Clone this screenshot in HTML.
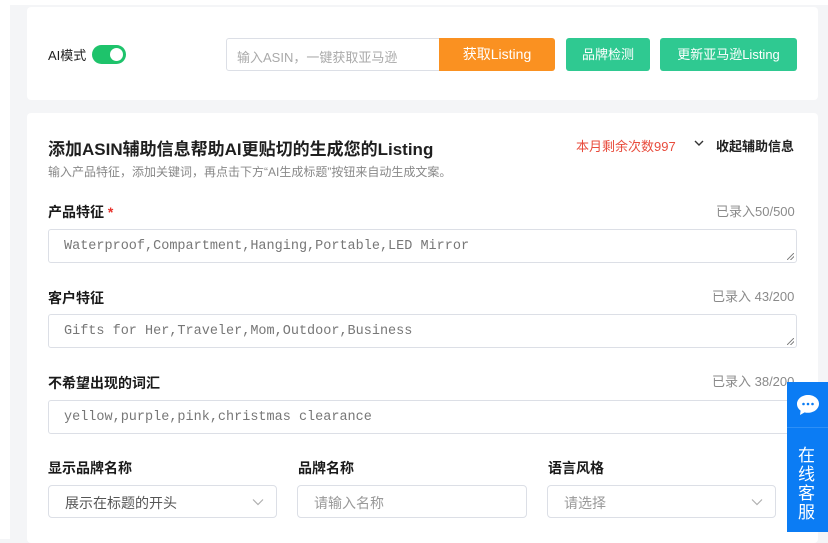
<!DOCTYPE html>
<html><head><meta charset="utf-8"><style>
*{box-sizing:border-box;margin:0;padding:0}
body{width:828px;height:539px;overflow:hidden;background:#f4f5f7;font-family:"Liberation Sans","Noto Sans CJK SC",sans-serif;position:relative;color:#1f1f1f}
.abs{position:absolute}
.card{position:absolute;background:#fff;border-radius:4px}
.lbl{font-size:14px;font-weight:bold;color:#1a1a1a}
.cnt{font-size:13px;color:#8a8a8a}
.ta{position:absolute;left:48px;width:749px;height:34px;border:1px solid #dcdfe6;border-radius:3px;font-family:"Liberation Mono","Noto Sans CJK SC",monospace;font-size:13.5px;color:#777;padding:9px 15px}
.ta:after{content:"";position:absolute;right:2px;bottom:2px;width:7px;height:7px;background:linear-gradient(135deg,transparent 45%,#888 45%,#888 55%,transparent 55%,transparent 70%,#888 70%,#888 80%,transparent 80%)}
.sel{position:absolute;height:33px;border:1px solid #dcdfe6;border-radius:4px;font-size:14px;color:#999;padding:7px 16px}
.btn{position:absolute;top:38px;height:33px;border-radius:3px;color:#fff;font-size:13px;text-align:center;line-height:33px}
</style></head><body>
<div class="abs" style="left:0;top:0;width:828px;height:5px;background:#fff"></div>
<div class="abs" style="left:0;top:0;width:10px;height:539px;background:#fff"></div>
<div class="card" style="left:27px;top:7px;width:791px;height:93px"></div>
<div class="card" style="left:27px;top:113px;width:791px;height:430px"></div>
<div class="abs" style="left:48px;top:45px;font-size:13px">AI模式</div>
<div class="abs" style="left:92px;top:45px;width:34px;height:19px;border-radius:10px;background:#1ec36b"><div class="abs" style="right:3px;top:3px;width:13px;height:13px;border-radius:50%;background:#fff"></div></div>
<div class="abs" style="left:226px;top:38px;width:214px;height:33px;border:1px solid #dcdfe6;border-radius:3px 0 0 3px;font-size:13px;color:#aaa;padding:8px 10px">输入ASIN，一键获取亚马逊</div>
<div class="btn" style="left:439px;width:116px;background:#fa9121;border-radius:0 3px 3px 0;font-size:14px">获取Listing</div>
<div class="btn" style="left:566px;width:84px;background:#2fc991">品牌检测</div>
<div class="btn" style="left:660px;width:137px;background:#2fc991">更新亚马逊Listing</div>
<div class="abs" style="left:48px;top:135px;font-size:17px;font-weight:bold">添加ASIN辅助信息帮助AI更贴切的生成您的Listing</div>
<div class="abs" style="left:48px;top:163px;font-size:12px;color:#888">输入产品特征，添加关键词，再点击下方“AI生成标题”按钮来自动生成文案。</div>
<div class="abs" style="left:576px;top:136px;font-size:13px;color:#e84c3d">本月剩余次数997</div>
<svg class="abs" style="left:693px;top:139px" width="12" height="8" viewBox="0 0 12 8"><path d="M2 2l4 4 4-4" fill="none" stroke="#333" stroke-width="1.4"/></svg>
<div class="abs" style="left:716px;top:136px;font-size:13px;font-weight:bold">收起辅助信息</div>
<div class="abs lbl" style="left:48px;top:202px">产品特征 <span style="color:#e8312a">*</span></div>
<div class="abs cnt" style="left:716px;top:201px">已录入50/500</div>
<div class="ta" style="top:229px">Waterproof,Compartment,Hanging,Portable,LED Mirror</div>
<div class="abs lbl" style="left:48px;top:288px">客户特征</div>
<div class="abs cnt" style="left:712px;top:286px">已录入 43/200</div>
<div class="ta" style="top:314px">Gifts for Her,Traveler,Mom,Outdoor,Business</div>
<div class="abs lbl" style="left:48px;top:373px">不希望出现的词汇</div>
<div class="abs cnt" style="left:712px;top:371px">已录入 38/200</div>
<div class="ta" style="top:400px">yellow,purple,pink,christmas clearance</div>
<div class="abs lbl" style="left:48px;top:458px">显示品牌名称</div>
<div class="abs lbl" style="left:298px;top:458px">品牌名称</div>
<div class="abs lbl" style="left:548px;top:458px">语言风格</div>
<div class="sel" style="left:48px;top:485px;width:229px;color:#555">展示在标题的开头<svg class="abs" style="right:12px;top:12px" width="12" height="8" viewBox="0 0 12 8"><path d="M1 1.5l5 5 5-5" fill="none" stroke="#b0b0b0" stroke-width="1.2"/></svg></div>
<div class="sel" style="left:297px;top:485px;width:230px">请输入名称</div>
<div class="sel" style="left:547px;top:485px;width:229px">请选择<svg class="abs" style="right:12px;top:12px" width="12" height="8" viewBox="0 0 12 8"><path d="M1 1.5l5 5 5-5" fill="none" stroke="#b0b0b0" stroke-width="1.2"/></svg></div>
<div class="abs" style="left:787px;top:382px;width:41px;height:150px;background:#0b7cf4;color:#fff">
<svg class="abs" style="left:9px;top:12px" width="24" height="22" viewBox="0 0 24 22"><path d="M12 1C5.9 1 1 5 1 10c0 2.7 1.4 5 3.6 6.6L4 21l4.6-2.6c1.1.3 2.2.4 3.4.4 6.1 0 11-4 11-9S18.1 1 12 1z" fill="#fff"/><circle cx="7.5" cy="10" r="1.3" fill="#0b7cf4"/><circle cx="12" cy="10" r="1.3" fill="#0b7cf4"/><circle cx="16.5" cy="10" r="1.3" fill="#0b7cf4"/></svg>
<div class="abs" style="left:0;top:45px;width:41px;height:1px;background:#2d8ff6"></div>
<div class="abs" style="left:11px;top:64px;width:20px;font-size:17px;line-height:19px">在线客服</div>
</div>
</body></html>
